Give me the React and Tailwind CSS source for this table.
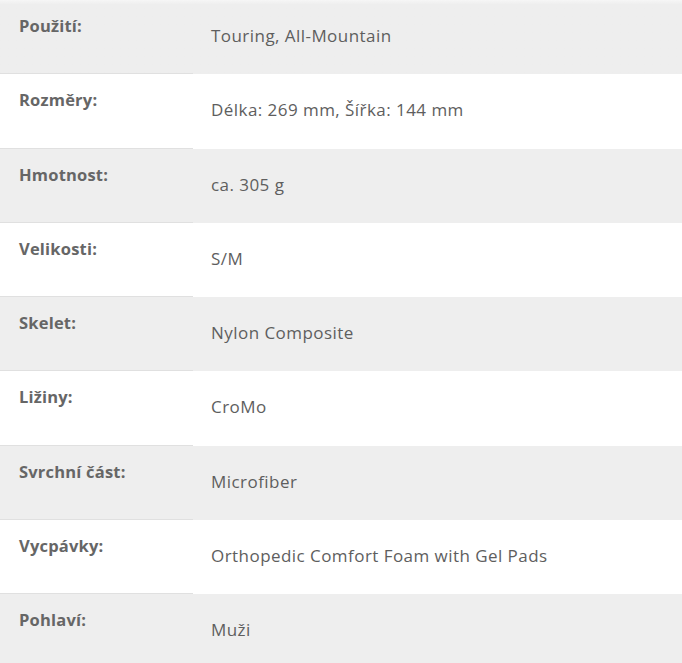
const rows = [
  ["Použití:", "Touring, All-Mountain"],
  ["Rozměry:", "Délka: 269 mm, Šířka: 144 mm"],
  ["Hmotnost:", "ca. 305 g"],
  ["Velikosti:", "S/M"],
  ["Skelet:", "Nylon Composite"],
  ["Ližiny:", "CroMo"],
  ["Svrchní část:", "Microfiber"],
  ["Vycpávky:", "Orthopedic Comfort Foam with Gel Pads"],
  ["Pohlaví:", "Muži"],
];

export default function App() {
  return (
    <div
      className="w-[682px] h-[663px] overflow-hidden bg-white"
      style={{ fontFamily: "'Open Sans', sans-serif" }}
    >
      {rows.map(([label, value], i) => (
        <div
          key={label}
          className={`flex h-[74.3px] ${i % 2 === 0 ? "bg-[#eeeeee]" : "bg-white"} ${
            i === 0 ? "bg-gradient-to-b from-[#f6f6f6] from-0% to-[#eeeeee] to-[6%]" : ""
          }`}
        >
          <div className="w-[193px] shrink-0 border-b-[1.5px] border-[#e0e0e0] pl-[19px] pt-[15px] text-[16.5px] font-bold leading-[22px] tracking-[0.2px] text-[#666666]">
            {label}
          </div>
          <div className="pl-[18px] pt-[24px] text-[17px] leading-[24px] tracking-[0.45px] text-[#5e5e5e]">
            {value}
          </div>
        </div>
      ))}
    </div>
  );
}
